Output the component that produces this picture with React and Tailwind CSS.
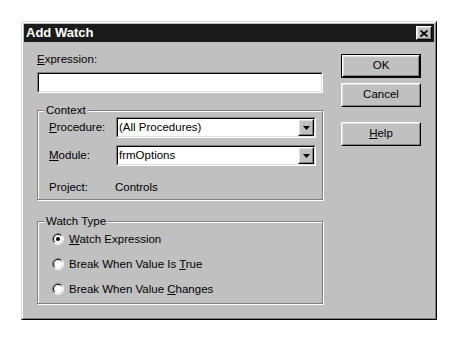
const raised =
  "border border-t-white border-l-white border-r-black border-b-black";
const raisedInner =
  "border border-t-[#dfdfdf] border-l-[#dfdfdf] border-r-[#808080] border-b-[#808080]";
const sunken =
  "border border-t-[#808080] border-l-[#808080] border-r-white border-b-white";
const sunkenInner =
  "border border-t-black border-l-black border-r-[#dfdfdf] border-b-[#dfdfdf]";
const groupBox =
  "border border-[#808080] shadow-[inset_1px_1px_0_#fff,1px_1px_0_#fff]";
const legend = "ml-[6px] bg-[#c0c0c0] px-[2px] leading-[14px]";

function Button({ children, isDefault, className = "" }) {
  const face = (
    <div className={`h-full ${raised}`}>
      <div className={`flex h-full items-center justify-center ${raisedInner}`}>
        {children}
      </div>
    </div>
  );
  return (
    <div className={`h-[24px] w-[80px] ${className}`}>
      {isDefault ? <div className="h-full border border-black">{face}</div> : face}
    </div>
  );
}

function Combo({ value }) {
  return (
    <div className={`h-[21px] w-[200px] ${sunken}`}>
      <div className={`flex h-full bg-white ${sunkenInner}`}>
        <div className="flex-1 pl-px leading-[17px]">{value}</div>
        <div className={`h-full w-[16px] bg-[#c0c0c0] ${raised}`}>
          <div className={`flex h-full items-center justify-center ${raisedInner}`}>
            <svg width="7" height="4" viewBox="0 0 7 4">
              <path d="M0 0H7L3.5 4Z" fill="black" />
            </svg>
          </div>
        </div>
      </div>
    </div>
  );
}

function Radio({ checked, children }) {
  return (
    <div className="flex h-[16px] items-center gap-[5px] pl-[14px]">
      <svg width="12" height="12" viewBox="0 0 12 12">
        <circle cx="6" cy="6" r="5" fill="white" />
        <path d="M2.1 9.9A5.5 5.5 0 0 1 9.9 2.1" fill="none" stroke="#808080" />
        <path d="M9.9 2.1A5.5 5.5 0 0 1 2.1 9.9" fill="none" stroke="#fff" />
        <path d="M2.8 9.2A4.5 4.5 0 0 1 9.2 2.8" fill="none" stroke="#000" />
        <path d="M9.2 2.8A4.5 4.5 0 0 1 2.8 9.2" fill="none" stroke="#dfdfdf" />
        {checked && <circle cx="6" cy="6" r="2" fill="black" />}
      </svg>
      <span className="leading-[14px]">{children}</span>
    </div>
  );
}

export default function App() {
  return (
    <div className="min-h-screen bg-white pl-[21px] pt-[21px] font-['Liberation_Sans',Arial,sans-serif] text-[11.5px] text-black">
      <div className="h-[299px] w-[416px] border border-t-[#dfdfdf] border-l-[#dfdfdf] border-r-black border-b-black bg-[#c0c0c0]">
        <div className="flex h-full flex-col border border-t-white border-l-white border-r-[#808080] border-b-[#808080] p-px">
          {/* TITLE BAR */}
          <div className="flex h-[18px] items-center bg-[#1b1b1b] pl-[2px] pr-[2px]">
            <span className="text-[13px] font-bold text-white">Add Watch</span>
            <div className={`ml-auto h-[14px] w-[16px] bg-[#c0c0c0] ${raised}`}>
              <div className={`flex h-full items-center justify-center ${raisedInner}`}>
                <svg width="8" height="7" viewBox="0 0 8 7">
                  <path d="M0.5 0.5L7.5 6.5M7.5 0.5L0.5 6.5" stroke="black" strokeWidth="1.7" />
                </svg>
              </div>
            </div>
          </div>

          {/* BODY */}
          <div className="flex flex-1 px-[13px]">
            <div className="w-[286px] pt-[10px]">
              <div className="leading-[14px]">
                <u>E</u>xpression:
              </div>
              <div className={`mt-[6px] h-[21px] ${sunken}`}>
                <div className={`h-full bg-white ${sunkenInner}`} />
              </div>

              <fieldset className={`mt-[10px] pb-[5px] ${groupBox}`}>
                <legend className={legend}>Context</legend>
                <div className="flex h-[21px] items-center pl-[11px]">
                  <span className="w-[67px]">
                    <u>P</u>rocedure:
                  </span>
                  <Combo value="(All Procedures)" />
                </div>
                <div className="mt-[7px] flex h-[21px] items-center pl-[11px]">
                  <span className="w-[67px]">
                    <u>M</u>odule:
                  </span>
                  <Combo value="frmOptions" />
                </div>
                <div className="mt-[14px] flex h-[14px] items-center pl-[11px] leading-[14px]">
                  <span className="w-[66px]">Project:</span>
                  <span>Controls</span>
                </div>
              </fieldset>

              <fieldset className={`mt-[14px] flex flex-col gap-[9px] pb-[6px] pt-[3px] ${groupBox}`}>
                <legend className={legend}>Watch Type</legend>
                <Radio checked>
                  <u>W</u>atch Expression
                </Radio>
                <Radio>
                  Break When Value Is <u>T</u>rue
                </Radio>
                <Radio>
                  Break When Value <u>C</u>hanges
                </Radio>
              </fieldset>
            </div>

            {/* BUTTONS */}
            <div className="ml-[18px] w-[80px] pt-[12px]">
              <Button isDefault>OK</Button>
              <Button className="mt-[5px]">Cancel</Button>
              <Button className="mt-[15px]">
                <span>
                  <u>H</u>elp
                </span>
              </Button>
            </div>
          </div>
        </div>
      </div>
    </div>
  );
}
